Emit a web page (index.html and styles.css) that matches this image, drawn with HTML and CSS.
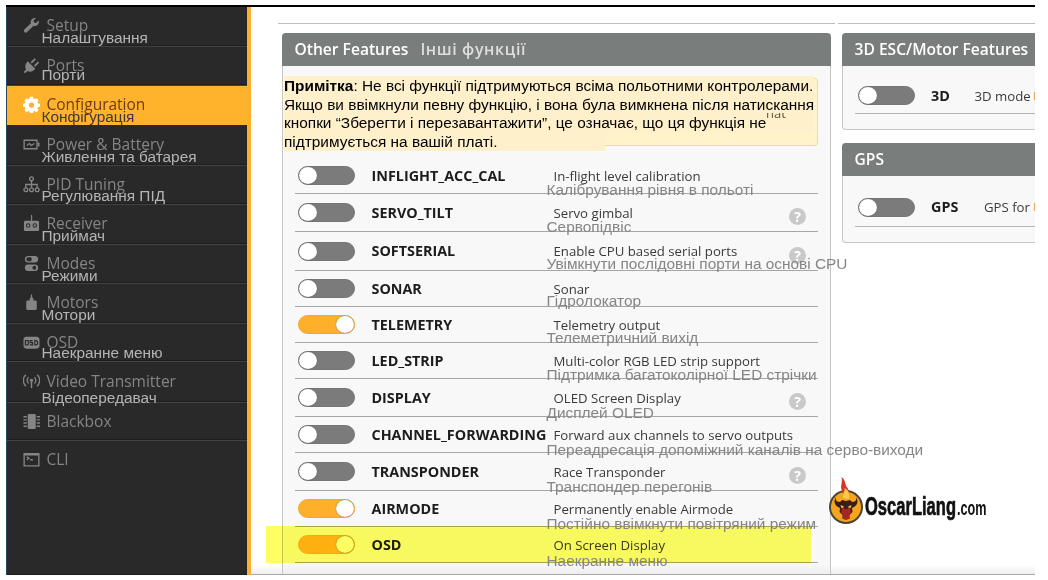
FILE: index.html
```
<!DOCTYPE html>
<html lang="uk">
<head>
<meta charset="utf-8">
<title>Configuration</title>
<link rel="stylesheet" href="styles.css">
</head>
<body>
<div class="window">
  <nav class="sidebar">
    <div class="nav-item">
      <svg class="icon" viewBox="0 0 18 18"><path d="M16.6 3.8 13.8 6.4 11.6 5.9 11.2 3.8 13.7 1.2C11.300 .5 8.500 2 8.200 4.700c-.1.700 0 1.300.2 1.900L1.500 13.300c-1.600 1.800.9 4.400 2.800 2.700l6.900-6.700c3.300 1 6.500-1.800 5.400-5.500z"/></svg>
      <span>Setup</span><em class="tr">Налаштування</em></div>
    <div class="nav-item">
      <svg class="icon" viewBox="0 0 18 18"><path d="M5 4.500 13 12.500C10.500 16 7 16.300 4.800 14.800L2.200 17.300.7 15.800 3.200 13.200C1.700 10.700 2 7.500 5 4.500zM8 5.500 12.200 1.300l1.400 1.400-4.200 4.200zM11.500 9l4.200-4.200 1.400 1.400-4.200 4.200z"/></svg>
      <span>Ports</span><em class="tr">Порти</em></div>
    <div class="nav-item active">
      <svg class="icon" viewBox="0 0 18 18"><path fill-rule="evenodd" d="M7.400.8h3.200l.5 2.200 1.200.5 2-1.200 2.200 2.300-1.200 1.900.5 1.200 2.200.5v3.100l-2.200.5-.5 1.200 1.200 2-2.200 2.200-2-1.200-1.200.5-.5 2.200H7.400L6.900 16.500l-1.200-.5-2 1.200-2.200-2.200 1.200-2-.5-1.200L0 11.300V8.200l2.200-.5.5-1.200L1.500 4.600l2.200-2.300 2 1.200L6.900 3zM9 6.800a2.800 2.800 0 1 0 0 5.600 2.800 2.800 0 0 0 0-5.600z"/></svg>
      <span>Configuration</span><em class="tr">Конфігурація</em></div>
    <div class="nav-item">
      <svg class="icon" viewBox="0 0 18 18"><path class="line" d="M1.200 4.500h13.600v9H1.200zM4 10l2.800-2 2 2 3.200-2"/><path d="M15.500 7h2v4h-2z"/></svg>
      <span>Power &amp; Battery</span><em class="tr">Живлення та батарея</em></div>
    <div class="nav-item">
      <svg class="icon" viewBox="0 0 18 18"><g class="line"><circle cx="9" cy="3" r="2"/><circle cx="3" cy="14.500" r="2"/><circle cx="9" cy="14.500" r="2"/><circle cx="15" cy="14.500" r="2"/><path d="M9 5v7.500M3 12.500V9h12v3.500"/></g></svg>
      <span>PID Tuning</span><em class="tr">Регулювання ПІД</em></div>
    <div class="nav-item">
      <svg class="icon" viewBox="0 0 18 18"><path fill-rule="evenodd" d="M8.500 0h1.200v6H15c1.400 0 2 .6 2 2v7.500c0 1-.5 1.500-1.500 1.500h-13c-1 0-1.500-.5-1.500-1.500V8c0-1.400.6-2 2-2h5.500zM5.500 8.800a2.400 2.400 0 1 0 0 4.800 2.400 2.400 0 0 0 0-4.800zm7 0a2.400 2.400 0 1 0 0 4.800 2.400 2.400 0 0 0 0-4.800z"/><circle cx="5.500" cy="11.200" r="1.300"/><circle cx="12.500" cy="11.200" r="1.300"/></svg>
      <span>Receiver</span><em class="tr">Приймач</em></div>
    <div class="nav-item">
      <svg class="icon" viewBox="0 0 18 18"><path fill-rule="evenodd" d="M5.500 1h7a3.500 3.500 0 0 1 0 7h-7a3.500 3.500 0 0 1 0-7zm0 1.500a2 2 0 1 0 0 4h3a3 3 0 0 0 0-4zM5.500 10h7a3.500 3.500 0 0 1 0 7h-7a3.500 3.500 0 0 1 0-7zm6.500 1.500a2 2 0 1 0 0 4 2 2 0 0 0 0-4z"/></svg>
      <span>Modes</span><em class="tr">Режими</em></div>
    <div class="nav-item">
      <svg class="icon" viewBox="0 0 18 18"><path d="M8.200 1.500 9 0l.8 1.500v2.200l1.200 1V7h1.800c1.200 0 1.800.6 1.800 1.800v6.400c0 1.200-.6 1.800-1.800 1.800H5.200c-1.200 0-1.800-.6-1.800-1.800V8.800C3.400 7.600 4 7 5.200 7H7V4.700l1.200-1z"/></svg>
      <span>Motors</span><em class="tr">Мотори</em></div>
    <div class="nav-item">
      <svg class="icon" viewBox="0 0 18 18"><rect x="0.500" y="3" width="17" height="12.500" rx="3.500"/><g class="cut"><rect x="2.500" y="7" width="3" height="4.500"/><path d="M10.200 7H7.500v2.200h2.700v2.300H7.300M12.500 7h1.700l1.300 1v2.500l-1.300 1h-1.700z"/></g></svg>
      <span>OSD</span><em class="tr">Наекранне меню</em></div>
    <div class="nav-item">
      <svg class="icon" viewBox="0 0 18 18"><circle cx="9" cy="7.800" r="1.800"/><path d="M8.200 9h1.600v7H8.200z"/><path class="line" d="M5.900 11.200a4.600 4.600 0 0 1 0-6.800M12.100 11.200a4.600 4.600 0 0 0 0-6.800M3 14a8.400 8.400 0 0 1 0-12.200M15 14a8.400 8.400 0 0 0 0-12.200"/></svg>
      <span>Video Transmitter</span><em class="tr">Відеопередавач</em></div>
    <div class="nav-item">
      <svg class="icon" viewBox="0 0 18 18"><rect x="5" y="1" width="8.500" height="16" rx="1"/><path class="line" d="M.5 4h3.500M.5 7.300h3.500M.5 10.600h3.500M.5 14h3.500M14.500 4H18M14.500 7.300H18M14.500 10.600H18M14.500 14H18"/></svg>
      <span>Blackbox</span></div>
    <div class="nav-item">
      <svg class="icon" viewBox="0 0 18 18"><path class="line" d="M1.200 2.800h15.600v13H1.200zM1.200 4h15.600M4 6.200l2.300 1.600L4 9.500M7.500 9.300h3"/></svg>
      <span>CLI</span></div>
  </nav>

  <main class="content">
    <section class="column main-column">
      <div class="panel features">
        <h2>Other Features <span class="h-tr">Інші функції</span></h2>
        <div class="note-area">
          <div class="note-box"></div>
          <p class="note"><mark><b>Примітка</b>: Не всі функції підтримуються всіма польотними контролерами.<br>Якщо ви ввімкнули певну функцію, і вона була вимкнена після натискання<br>кнопки “Зберегти і перезавантажити”, це означає, що ця функція не<br></mark><mark class="last">підтримується на вашій платі.</mark></p>
          <div class="note-rest"><span>hat</span></div>
        </div>
        <div class="rows">
          <div class="row"><i class="toggle"></i><b>INFLIGHT_ACC_CAL</b><span>In-flight level calibration</span></div>
          <div class="row"><i class="toggle"></i><b>SERVO_TILT</b><span>Servo gimbal</span><i class="help">?</i></div>
          <div class="row"><i class="toggle"></i><b>SOFTSERIAL</b><span>Enable CPU based serial ports</span><i class="help">?</i></div>
          <div class="row"><i class="toggle"></i><b>SONAR</b><span>Sonar</span></div>
          <div class="row"><i class="toggle on"></i><b>TELEMETRY</b><span>Telemetry output</span></div>
          <div class="row"><i class="toggle"></i><b>LED_STRIP</b><span>Multi-color RGB LED strip support</span></div>
          <div class="row"><i class="toggle"></i><b>DISPLAY</b><span>OLED Screen Display</span><i class="help">?</i></div>
          <div class="row"><i class="toggle"></i><b>CHANNEL_FORWARDING</b><span>Forward aux channels to servo outputs</span></div>
          <div class="row"><i class="toggle"></i><b>TRANSPONDER</b><span>Race Transponder</span><i class="help">?</i></div>
          <div class="row"><i class="toggle on"></i><b>AIRMODE</b><span>Permanently enable Airmode</span></div>
          <div class="row marked"><i class="toggle on"></i><b>OSD</b><span>On Screen Display</span></div>
          <div class="translations">
            <div>Калібрування рівня в польоті</div>
            <div>Сервопідвіс</div>
            <div>Увімкнути послідовні порти на основі CPU</div>
            <div>Гідролокатор</div>
            <div>Телеметричний вихід</div>
            <div>Підтримка багатоколірної LED стрічки</div>
            <div>Дисплей OLED</div>
            <div>Переадресація допоміжний каналів на серво-виходи</div>
            <div>Транспондер перегонів</div>
            <div>Постійно ввімкнути повітряний режим</div>
            <div>Наекранне меню</div>
          </div>
        </div>
      </div>
    </section>

    <section class="column side-column">
      <div class="panel small esc">
        <h2>3D ESC/Motor Features</h2>
        <div class="single"><i class="toggle"></i><b>3D</b><span>3D mode</span><s></s></div>
      </div>
      <div class="panel small gps">
        <h2>GPS</h2>
        <div class="single"><i class="toggle"></i><b>GPS</b><span>GPS for</span><s></s></div>
      </div>
    </section>
  </main>

  <svg class="brand" viewBox="0 0 170 52">
    <circle cx="18" cy="31" r="17" fill="#4a4534"/>
    <circle cx="18" cy="31" r="15" fill="#f6a51f"/>
    <path d="M15 17C11 10 15 8 13.500 1c5 4 3 8 6 11 2 3 2 6 1 9h-5z" fill="#d8322a"/>
    <path d="M15.500 22c-2-4 2-6 1-10 4 2 6 6 4 11z" fill="#f9c94a"/>
    <path d="M8 21c-1 4 1 5 4 5l2-2 4 1 4-1 2 2c3 0 5-1 4-5 3 5 1 8-2 10l-2 1 .5 4-3 3v4h-7v-4l-3-3 .5-4-2-1c-3-2-5-5-2-10z" fill="#3a1c18"/>
    <path d="M14 31l3 2h2l3-2 1 6-2 2v4l-3 1-3-1v-4l-2-2z" fill="#a52622"/>
    <path d="M12.500 29l4 2-3 1zM23.500 29l-4 2 3 1z" fill="#ffd23c"/>
    <text class="brand-name" x="37" y="39" textLength="91" lengthAdjust="spacingAndGlyphs">OscarLiang</text>
    <text class="brand-tld" x="129" y="39" textLength="29.500" lengthAdjust="spacingAndGlyphs">.com</text>
  </svg>
</div>
</body>
</html>
```
FILE: styles.css
```
* { box-sizing: border-box; }

body {
  margin: 0;
  width: 1048px;
  height: 580px;
  overflow: hidden;
  background: #fff;
  font-family: "Open Sans", "Noto Sans", sans-serif;
}

.window {
  position: relative;
  display: flex;
  width: 1029px;
  height: 570px;
  margin: 5px 0 0 6px;
  border-top: 2px solid #000;
}

/* Sidebar */
.sidebar {
  display: grid;
  grid-template-rows: 40px 39px 39px 41px 39px 40px 39px 40px 38px 41px 38px 134px;
  flex: none;
  width: 245px;
  border-left: 1px solid #25485a;
  border-right: 4px solid #fbb034;
  background: #292929;
}

.nav-item {
  position: relative;
  display: flex;
  align-items: flex-start;
  gap: 6.500px;
  padding: 7px 0 0 16px;
  border-bottom: 1px solid #424240;
  box-shadow: inset 0 -1px #1e1e1e;
  color: #858585;
  font-size: 15.500px;
  line-height: 22px;
  white-space: nowrap;
}

.nav-item:last-child { border-bottom: 0; }

.nav-item.active {
  border-color: #ffb32c;
  box-shadow: none;
  background: #ffb32c;
  color: #6e3c10;
}

.nav-item:nth-child(4),
.nav-item:nth-child(10) { padding-top: 8px; }

.icon {
  width: 17px;
  height: 17px;
  margin-top: 3px;
  fill: currentColor;
}

.icon .line { fill: none; stroke: currentColor; stroke-width: 1.4; }
.icon .cut { fill: none; stroke: #292929; stroke-width: 1.2; }
.active .icon { fill: #fff; }

.tr {
  position: absolute;
  left: 34.500px;
  top: 22px;
  color: #b4b4b4;
  font: 15.400px/18px "Liberation Sans", Arial, sans-serif;
}

.active .tr { color: #3a3a3c; }
.nav-item:nth-child(2) .tr { top: 19px; }
.nav-item:nth-child(4) .tr { top: 23px; }
.nav-item:nth-child(5) .tr { top: 21px; }
.nav-item:nth-child(9) .tr { top: 20px; }
.nav-item:nth-child(10) .tr { top: 27px; }

/* Content */
.content {
  display: flex;
  flex: 1;
  gap: 3px;
  min-width: 0;
  padding: 16px 0 0 27px;
  border-bottom: 1px solid #aaa;
  background: linear-gradient(#fff, #fff 558px, #eee 567px);
}

.column { padding-top: 9px; border-top: 1px solid #bdbdbd; }
.main-column { flex: none; width: 557px; padding-left: 4px; padding-right: 4px; }
.side-column { flex: 1; min-width: 0; padding-left: 4px; }

.panel {
  border: 1px solid #c6c6c6;
  border-radius: 4px 4px 0 0;
  background: #f8f8f8;
}

.panel h2 {
  height: 33px;
  margin: -1px -1px 0;
  padding-left: 12.500px;
  border-radius: 4px 4px 0 0;
  background: #797d7b;
  color: #fff;
  font-size: 15.600px;
  font-weight: 600;
  line-height: 32px;
  white-space: nowrap;
}

.h-tr {
  margin-left: 8px;
  color: #dedede;
  font-size: 16px;
  letter-spacing: 0.600px;
}

.features {
  height: 541px;
  border-bottom: 0;
  background: linear-gradient(#f8f8f8 530px, #eee);
}

.note-area { position: relative; height: 90px; padding: 10px 0 0 1px; }

.note-box {
  position: absolute;
  left: 12px;
  top: 12px;
  width: 523px;
  height: 68px;
  border: 1px solid #f0df84;
  border-radius: 3px;
  background: #fff3c9;
}

/* Only the lower edge of the covered line stays visible. */
.note-rest {
  position: absolute;
  left: 483px;
  top: 47px;
  display: flex;
  align-items: flex-end;
  height: 5px;
  overflow: hidden;
  color: #5a5640;
  font-size: 13px;
  line-height: 10px;
}

.note {
  position: relative;
  margin: 0;
  color: #000;
  font: 15.400px/18.600px "Liberation Sans", Arial, sans-serif;
  white-space: nowrap;
}

.note mark {
  display: block;
  width: 530px;
  padding-top: 1px;
  background: #fff0cc;
  color: inherit;
}

.note .last { width: 321px; height: 18px; padding-top: 0; }

.rows {
  position: relative;
  display: grid;
  grid-template-columns: minmax(0, 1fr);
  grid-template-rows: 38px 38px 39px 36px 36px 36px 38px 36px 38px 36px 36px;
  margin: 0 17px 0 12px;
  width: 523px;
}

.row {
  position: relative;
  display: grid;
  grid-template-columns: 73.500px 182px minmax(0, 1fr) 18px;
  align-items: center;
  padding: 0 11px 0 3px;
  border-bottom: 1px solid #a6a6a6;
  white-space: nowrap;
}

.row:first-child { padding-top: 2px; }

.row b, .single b { color: #1c1c1c; font-size: 14.350px; line-height: 20px; }
.row span, .single span { color: #3a3a3a; font-size: 13.200px; line-height: 20px; }

.toggle {
  position: relative;
  width: 56.500px;
  height: 19px;
  border: 1px solid #757575;
  border-radius: 10px;
  background: #7b7b7b;
}

.toggle::after {
  content: "";
  display: block;
  width: 18px;
  height: 17px;
  border-radius: 50%;
  background: #fff;
  box-shadow: 0 0 1px #444;
}

.toggle.on { border-color: #f3a92d; background: #ffb02a; }
.toggle.on::after { margin-left: auto; }

.help {
  width: 17px;
  height: 17px;
  margin-top: 8px;
  border-radius: 50%;
  background: #c9c9c9;
  color: #fff;
  font: bold 14px/17px "Open Sans", sans-serif;
  text-align: center;
}

/* Highlighter stroke over the last row */
.marked::after {
  content: "";
  position: absolute;
  left: -29px;
  right: 7px;
  top: -1px;
  bottom: -1px;
  background: #ffff62;
  mix-blend-mode: multiply;
}

.translations {
  position: absolute;
  left: 251.500px;
  top: 15px;
  color: #858585;
  font: 15.400px/37.100px "Liberation Sans", Arial, sans-serif;
  white-space: nowrap;
  z-index: 1;
}

.small { border-right: 0; border-radius: 4px 0 0 4px; }
.small h2 { border-radius: 4px 0 0 0; margin-right: 0; }
.esc { height: 97px; }
.gps { height: 100px; margin-top: 13px; }

.single {
  display: flex;
  align-items: center;
  height: 48px;
  margin-left: 12px;
  padding: 12px 0 0 3px;
  border-bottom: 1px solid #b4b4b4;
  white-space: nowrap;
}

.gps .single { height: 51px; }
.single .toggle { flex: none; }
.single b { width: 43.500px; margin-left: 16.500px; }
.gps .single b { width: 53px; }
.single s { width: 1px; height: 8px; margin-left: auto; background: #eba55a; }

/* Brand mark */
.brand {
  position: absolute;
  left: 822px;
  top: 469px;
  width: 170px;
  height: 52px;
  overflow: visible;
}

.brand text { fill: #111; font-family: "Liberation Sans", Arial, sans-serif; font-weight: bold; }
.brand-name { font-size: 26px; stroke: #111; stroke-width: 0.700; }
.brand-tld { font-size: 20px; }
```
